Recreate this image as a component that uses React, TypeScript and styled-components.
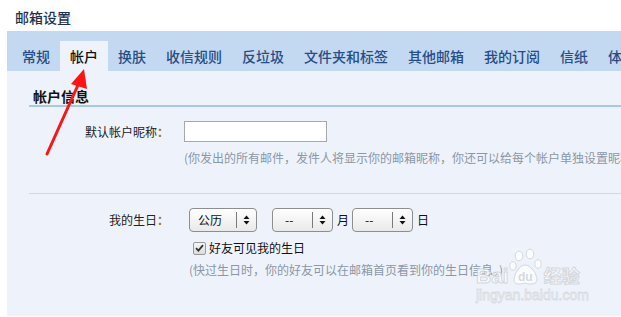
import React from "react";
import styled, { createGlobalStyle } from "styled-components";

const Global = createGlobalStyle`
  html, body { margin: 0; padding: 0; background: #ffffff; }
  body { font-family: "Noto Sans CJK SC", "Noto Sans", sans-serif; width: 621px; height: 317px; overflow: hidden; }
  * { box-sizing: border-box; }
`;

const Page = styled.div`
  position: relative;
  width: 621px;
  height: 317px;
  overflow: hidden;
`;

const Header = styled.div`
  height: 31px;
  padding: 8px 0 0 15px;
  font-size: 14px;
  line-height: 18px;
  font-weight: 500;
  color: #1c3350;
`;

const TabBar = styled.div`
  margin-left: 7px;
  height: 40px;
  background: #c3d9f1;
  display: flex;
  align-items: flex-end;
  padding-left: 5px;
  white-space: nowrap;
  overflow: hidden;
`;

const Tab = styled.div<{ $active?: boolean }>`
  height: 30px;
  line-height: 30px;
  padding: 0 10px;
  font-size: 14px;
  font-weight: 500;
  flex-shrink: 0;
  color: ${(p) => (p.$active ? "#111111" : "#264d86")};
  background: ${(p) => (p.$active ? "#eef3fb" : "transparent")};
`;

const Panel = styled.div`
  margin-left: 7px;
  height: 245px;
  background: #eef3fb;
  padding: 16px 0 0 22px;
`;

const SectionTitle = styled.div`
  height: 20px;
  padding-left: 4px;
  font-size: 14px;
  line-height: 18px;
  font-weight: bold;
  color: #111;
  border-bottom: 2px solid #a9c7e8;
`;

const Row = styled.div<{ $top: number }>`
  display: flex;
  align-items: center;
  margin-top: ${(p) => p.$top}px;
`;

const Label = styled.div`
  width: 140px;
  text-align: right;
  font-size: 12px;
  line-height: 18px;
  color: #222;
  flex-shrink: 0;
  margin-right: 15px;
`;

const Colon = styled.span`
  color: #a07818;
  font-weight: bold;
`;

const TextInput = styled.div`
  width: 143px;
  height: 21px;
  background: #fff;
  border: 1px solid #a8a8a8;
`;

const Hint = styled.div<{ $indent: number; $top: number }>`
  margin-left: ${(p) => p.$indent}px;
  margin-top: ${(p) => p.$top}px;
  font-size: 12px;
  line-height: 18px;
  color: #8b96a6;
  white-space: nowrap;
`;

const Separator = styled.div`
  margin-top: 26px;
  height: 1px;
  background: #cfd9e4;
`;

const Fields = styled.div`
  display: flex;
  align-items: center;
  margin-left: 5px;
`;

const Select = styled.div<{ $w: number }>`
  width: ${(p) => p.$w}px;
  height: 24px;
  border: 1px solid #8e8e8e;
  border-radius: 4px;
  background: linear-gradient(#ffffff, #e9e9e9);
  display: flex;
  align-items: center;
  font-size: 12px;
  color: #111;
  flex-shrink: 0;
`;

const SelectValue = styled.div<{ $pad: number }>`
  flex: 1;
  padding-left: ${(p) => p.$pad}px;
  line-height: 18px;
`;

const SelectArrow = styled.div`
  width: 20px;
  height: 16px;
  border-left: 1px solid #7a7a7a;
  display: flex;
  align-items: center;
  justify-content: center;
`;

const Unit = styled.span`
  font-size: 12px;
  line-height: 18px;
  color: #111;
  margin: 0 3px 0 4px;
`;

const Gap = styled.div<{ $w: number }>`
  width: ${(p) => p.$w}px;
`;

const CheckRow = styled.div`
  display: flex;
  align-items: center;
  margin: 7px 0 0 164px;
  font-size: 12px;
  line-height: 18px;
  color: #111;
`;

const CheckBox = styled.div`
  width: 13px;
  height: 13px;
  border: 1px solid #9a9a9a;
  border-radius: 2px;
  background: linear-gradient(#f6f6f6, #dcdcdc);
  margin-right: 3px;
  display: flex;
  align-items: center;
  justify-content: center;
`;

const Arrow = styled.svg`
  position: absolute;
  left: 0;
  top: 0;
  pointer-events: none;
`;

const Watermark = styled.div`
  position: absolute;
  left: 476px;
  top: 246px;
  width: 114px;
  height: 58px;
  pointer-events: none;
  opacity: 0.8;
`;

const WmTop = styled.div`
  display: flex;
  align-items: flex-end;
  height: 40px;
`;

const WmText = styled.span<{ $size: number }>`
  font-family: "Liberation Sans", sans-serif;
  font-weight: bold;
  font-size: ${(p) => p.$size}px;
  line-height: 20px;
  color: #ffffff;
  -webkit-text-stroke: 1px #cdd1d8;
`;

const WmCn = styled.span`
  font-size: 18px;
  line-height: 19px;
  font-weight: bold;
  color: #ffffff;
  -webkit-text-stroke: 1px #cdd1d8;
  margin: 0 0 1px 1px;
`;

const WmUrl = styled.div`
  font-family: "Liberation Sans", sans-serif;
  font-size: 14px;
  line-height: 14px;
  color: #ffffff;
  -webkit-text-stroke: 0.8px #d2d6dc;
  margin-top: 2px;
`;

const UpDown = () => (
  <svg width="7" height="10" viewBox="0 0 7 10">
    <path d="M3.5 0.5 L6.5 4 L0.5 4 Z" fill="#111" />
    <path d="M3.5 9.5 L6.5 6 L0.5 6 Z" fill="#111" />
  </svg>
);

const tabs = ["常规", "帐户", "换肤", "收信规则", "反垃圾", "文件夹和标签", "其他邮箱", "我的订阅", "信纸", "体验"];

export default function App() {
  return (
    <Page>
      <Global />
      <Header>邮箱设置</Header>
      <TabBar>
        {tabs.map((t) => (
          <Tab key={t} $active={t === "帐户"}>
            {t}
          </Tab>
        ))}
      </TabBar>
      <Panel>
        <SectionTitle>帐户信息</SectionTitle>
        <Row $top={14}>
          <Label>
            默认帐户昵称<Colon>：</Colon>
          </Label>
          <TextInput />
        </Row>
        <Hint $indent={155} $top={7}>
          (你发出的所有邮件，发件人将显示你的邮箱昵称，你还可以给每个帐户单独设置昵称)
        </Hint>
        <Separator />
        <Row $top={14}>
          <Label>
            我的生日<Colon>：</Colon>
          </Label>
          <Fields>
            <Select $w={68}>
              <SelectValue $pad={8}>公历</SelectValue>
              <SelectArrow>
                <UpDown />
              </SelectArrow>
            </Select>
            <Gap $w={15} />
            <Select $w={61}>
              <SelectValue $pad={12}>--</SelectValue>
              <SelectArrow>
                <UpDown />
              </SelectArrow>
            </Select>
            <Unit>月</Unit>
            <Select $w={61}>
              <SelectValue $pad={12}>--</SelectValue>
              <SelectArrow>
                <UpDown />
              </SelectArrow>
            </Select>
            <Unit>日</Unit>
          </Fields>
        </Row>
        <CheckRow>
          <CheckBox>
            <svg width="9" height="8" viewBox="0 0 9 8">
              <path d="M1 4.2 L3.4 6.6 L8 1.2" stroke="#333" strokeWidth="1.8" fill="none" />
            </svg>
          </CheckBox>
          好友可见我的生日
        </CheckRow>
        <Hint $indent={160} $top={4}>
          (快过生日时，你的好友可以在邮箱首页看到你的生日信息。)
        </Hint>
      </Panel>
      <Watermark>
        <WmTop>
          <WmText $size={21}>Bai</WmText>
          <svg width="34" height="38" viewBox="0 0 34 38">
            <g fill="#ffffff" stroke="#cdd1d8" strokeWidth="1">
              <ellipse cx="10" cy="8" rx="3.8" ry="4.8" />
              <ellipse cx="21" cy="6" rx="3.8" ry="4.8" />
              <ellipse cx="4" cy="18" rx="3.2" ry="4.2" />
              <ellipse cx="29" cy="16" rx="3.2" ry="4.2" />
              <path d="M16 17 C10 17 5 27 5 32 C5 36 10 37 16 35 C22 37 28 36 28 32 C28 26 22 17 16 17 Z" />
            </g>
            <text x="9" y="33" fontFamily="Liberation Sans, sans-serif" fontWeight="bold" fontSize="12" fill="#cfd3da">du</text>
          </svg>
          <WmCn>经验</WmCn>
        </WmTop>
        <WmUrl>jingyan.baidu.com</WmUrl>
      </Watermark>
      <Arrow width="621" height="317" viewBox="0 0 621 317">
        <line x1="47" y1="154" x2="78" y2="85" stroke="#ff1414" strokeWidth="3" strokeLinecap="round" />
        <path d="M84 69 L71 84 L87 89 Z" fill="#ff1414" />
      </Arrow>
    </Page>
  );
}
